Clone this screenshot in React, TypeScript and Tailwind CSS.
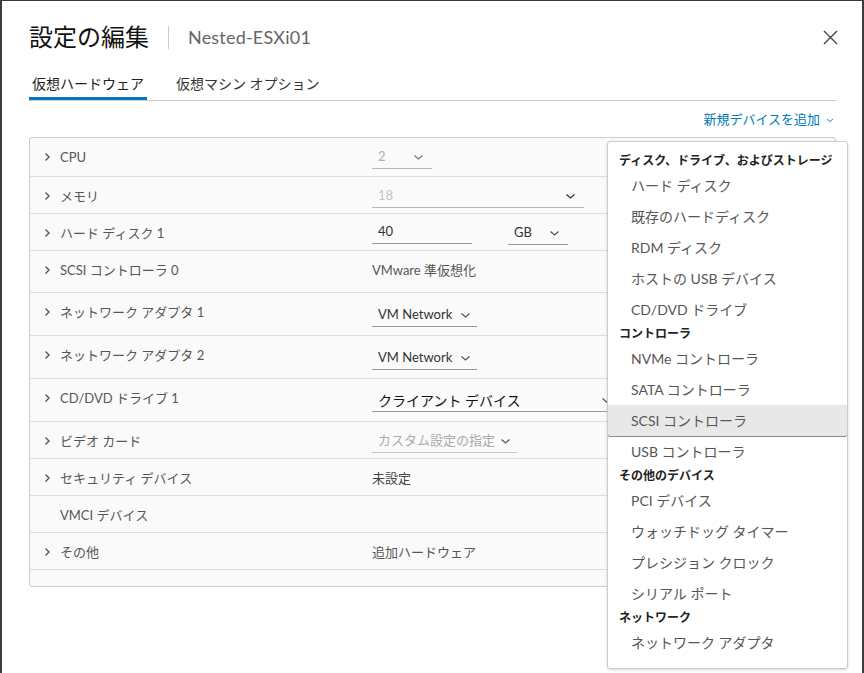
import React from 'react';

const ChevronRight = () => (
    <svg width="7" height="10" viewBox="0 0 7 10" className="mt-[3px]">
        <polyline points="1.5,1.5 5,5 1.5,8.5" fill="none" stroke="#565656" strokeWidth="1.4" />
    </svg>
);

const ChevronDown = ({ color = '#565656', w = 11 }: { color?: string; w?: number }) => (
    <svg width={w} height="7" viewBox="0 0 11 7">
        <polyline points="1.5,1.5 5.5,5 9.5,1.5" fill="none" stroke={color} strokeWidth="1.3" />
    </svg>
);

function Select({ text, className, textClass, chevron = '#565656' }: { text: string; className: string; textClass: string; chevron?: string }) {
    return (
        <div className={`h-[23px] flex items-center justify-between border-b border-[#9a9a9a] pl-[6px] ${className}`}>
            <span className={`whitespace-nowrap ${textClass}`}>{text}</span>
            <ChevronDown color={chevron} />
        </div>
    );
}

interface Row {
    label: string;
    h: string;
    chevron: boolean;
    value: React.ReactNode;
}

const rows: Row[] = [
    {
        label: 'CPU',
        h: 'h-[39px]',
        chevron: true,
        value: <Select text="2" className="mt-[8px] w-[60px] pr-[8px] border-[#b8b8b8]" textClass="text-[13px] text-[#b0b0b0]" chevron="#777" />,
    },
    {
        label: 'メモリ',
        h: 'h-[37px]',
        chevron: true,
        value: <Select text="18" className="mt-[8px] w-[212px] pr-[8px] border-[#b8b8b8]" textClass="text-[13px] text-[#c4c4c4]" chevron="#333" />,
    },
    {
        label: 'ハード ディスク 1',
        h: 'h-[37px]',
        chevron: true,
        value: (
            <div className="flex gap-[36px] mt-[7px]">
                <div className="h-[23px] w-[100px] flex items-center border-b border-[#9a9a9a] pl-[6px] text-[13px] text-[#333]">40</div>
                <Select text="GB" className="w-[60px] pr-[8px] mt-[1px]" textClass="text-[13px] text-[#333]" />
            </div>
        ),
    },
    {
        label: 'SCSI コントローラ 0',
        h: 'h-[42px]',
        chevron: true,
        value: <div className="mt-[11px] leading-[16px] text-[13px] text-[#565656]">VMware 準仮想化</div>,
    },
    {
        label: 'ネットワーク アダプタ 1',
        h: 'h-[43px]',
        chevron: true,
        value: <Select text="VM Network" className="mt-[11px] w-[105px] pr-[6px]" textClass="text-[13px] text-[#333]" />,
    },
    {
        label: 'ネットワーク アダプタ 2',
        h: 'h-[43px]',
        chevron: true,
        value: <Select text="VM Network" className="mt-[11px] w-[105px] pr-[6px]" textClass="text-[13px] text-[#333]" />,
    },
    {
        label: 'CD/DVD ドライブ 1',
        h: 'h-[43px]',
        chevron: true,
        value: <Select text="クライアント デバイス" className="mt-[10px] w-[242px] pr-[2px]" textClass="text-[14px] text-[#111]" />,
    },
    {
        label: 'ビデオ カード',
        h: 'h-[37px]',
        chevron: true,
        value: <Select text="カスタム設定の指定" className="mt-[8px] w-[145px] pr-[6px] border-[#c4c4c4]" textClass="text-[13px] text-[#aaa]" />,
    },
    {
        label: 'セキュリティ デバイス',
        h: 'h-[37px]',
        chevron: true,
        value: <div className="mt-[11px] leading-[16px] text-[13px] text-[#444]">未設定</div>,
    },
    {
        label: 'VMCI デバイス',
        h: 'h-[37px]',
        chevron: false,
        value: null,
    },
    {
        label: 'その他',
        h: 'h-[37px]',
        chevron: true,
        value: <div className="mt-[11px] leading-[16px] text-[13px] text-[#565656]">追加ハードウェア</div>,
    },
];

type MenuEntry = { kind: 'header' | 'item'; text: string; active?: boolean };

const menu: MenuEntry[] = [
    { kind: 'header', text: 'ディスク、ドライブ、およびストレージ' },
    { kind: 'item', text: 'ハード ディスク' },
    { kind: 'item', text: '既存のハードディスク' },
    { kind: 'item', text: 'RDM ディスク' },
    { kind: 'item', text: 'ホストの USB デバイス' },
    { kind: 'item', text: 'CD/DVD ドライブ' },
    { kind: 'header', text: 'コントローラ' },
    { kind: 'item', text: 'NVMe コントローラ' },
    { kind: 'item', text: 'SATA コントローラ' },
    { kind: 'item', text: 'SCSI コントローラ', active: true },
    { kind: 'item', text: 'USB コントローラ' },
    { kind: 'header', text: 'その他のデバイス' },
    { kind: 'item', text: 'PCI デバイス' },
    { kind: 'item', text: 'ウォッチドッグ タイマー' },
    { kind: 'item', text: 'プレシジョン クロック' },
    { kind: 'item', text: 'シリアル ポート' },
    { kind: 'header', text: 'ネットワーク' },
    { kind: 'item', text: 'ネットワーク アダプタ' },
];

export default function App() {
    return (
        <div className="w-[864px] h-[673px] bg-[#3c3c3c] pt-[1px] px-[2px] overflow-hidden font-[family-name:Lato,'Noto_Sans_CJK_JP',sans-serif]">
            <div className="relative bg-white h-[672px] pl-[27px] pr-[24px] pt-[20px]">
                {/* Header */}
                <div className="flex items-center h-[32px]">
                    <h1 className="text-[24px] leading-[32px] text-[#111]">設定の編集</h1>
                    <div className="w-px h-[23px] bg-[#cccccc] mx-[19px]" />
                    <span className="text-[18px] text-[#666] tracking-[0.2px]">Nested-ESXi01</span>
                    <button className="ml-auto w-[16px] h-[16px] flex items-center justify-center">
                        <svg width="15" height="15" viewBox="0 0 15 15">
                            <path d="M1 1 L14 14 M14 1 L1 14" stroke="#444" strokeWidth="1.4" />
                        </svg>
                    </button>
                </div>

                {/* Tabs */}
                <div className="flex mt-[21px] border-b border-[#cccccc] mr-[2px]">
                    <div className="px-[3px] pb-[3px] border-b-[3px] border-[#0079b8] text-[14px] leading-[20px] text-[#222]">仮想ハードウェア</div>
                    <div className="ml-[26px] px-[3px] pb-[3px] text-[14px] leading-[20px] text-[#333]">仮想マシン オプション</div>
                </div>

                {/* Add device */}
                <div className="flex justify-end items-center gap-[6px] mt-[10px] h-[18px] pr-[4px] text-[13px] text-[#0079b8]">
                    <span>新規デバイスを追加</span>
                    <ChevronDown color="#0079b8" w={8} />
                </div>

                {/* Hardware table */}
                <div className="mt-[8px] mr-[2px] border border-[#cccccc] rounded-[3px] bg-[#fafafa]">
                    {rows.map((r) => (
                        <div key={r.label} className={`flex border-b border-[#dddddd] ${r.h}`}>
                            <div className="w-[342px] flex pl-[14px] pt-[11px] shrink-0">
                                <div className="w-[16px]">{r.chevron && <ChevronRight />}</div>
                                <span className="text-[13px] leading-[16px] text-[#565656]">{r.label}</span>
                            </div>
                            <div>{r.value}</div>
                        </div>
                    ))}
                    <div className="h-[16px]" />
                </div>

                {/* Add device dropdown menu */}
                <div className="absolute left-[605px] top-[140px] w-[241px] h-[528px] bg-white border border-[#cccccc] rounded-[3px] shadow-[0_1px_3px_rgba(0,0,0,0.15)] pt-[10px]">
                    {menu.map((m) =>
                        m.kind === 'header' ? (
                            <div key={m.text} className="h-[18px] pl-[11px] flex items-center text-[12px] font-semibold text-[#222] whitespace-nowrap">
                                {m.text}
                            </div>
                        ) : (
                            <div
                                key={m.text}
                                className={`h-[31px] pl-[23px] flex items-center text-[14px] text-[#565656] ${m.active ? 'bg-[#e8e8e8] rounded-[2px] shadow-[0_1px_0_#8c8c8c]' : ''}`}
                            >
                                {m.text}
                            </div>
                        )
                    )}
                </div>
            </div>
        </div>
    );
}
